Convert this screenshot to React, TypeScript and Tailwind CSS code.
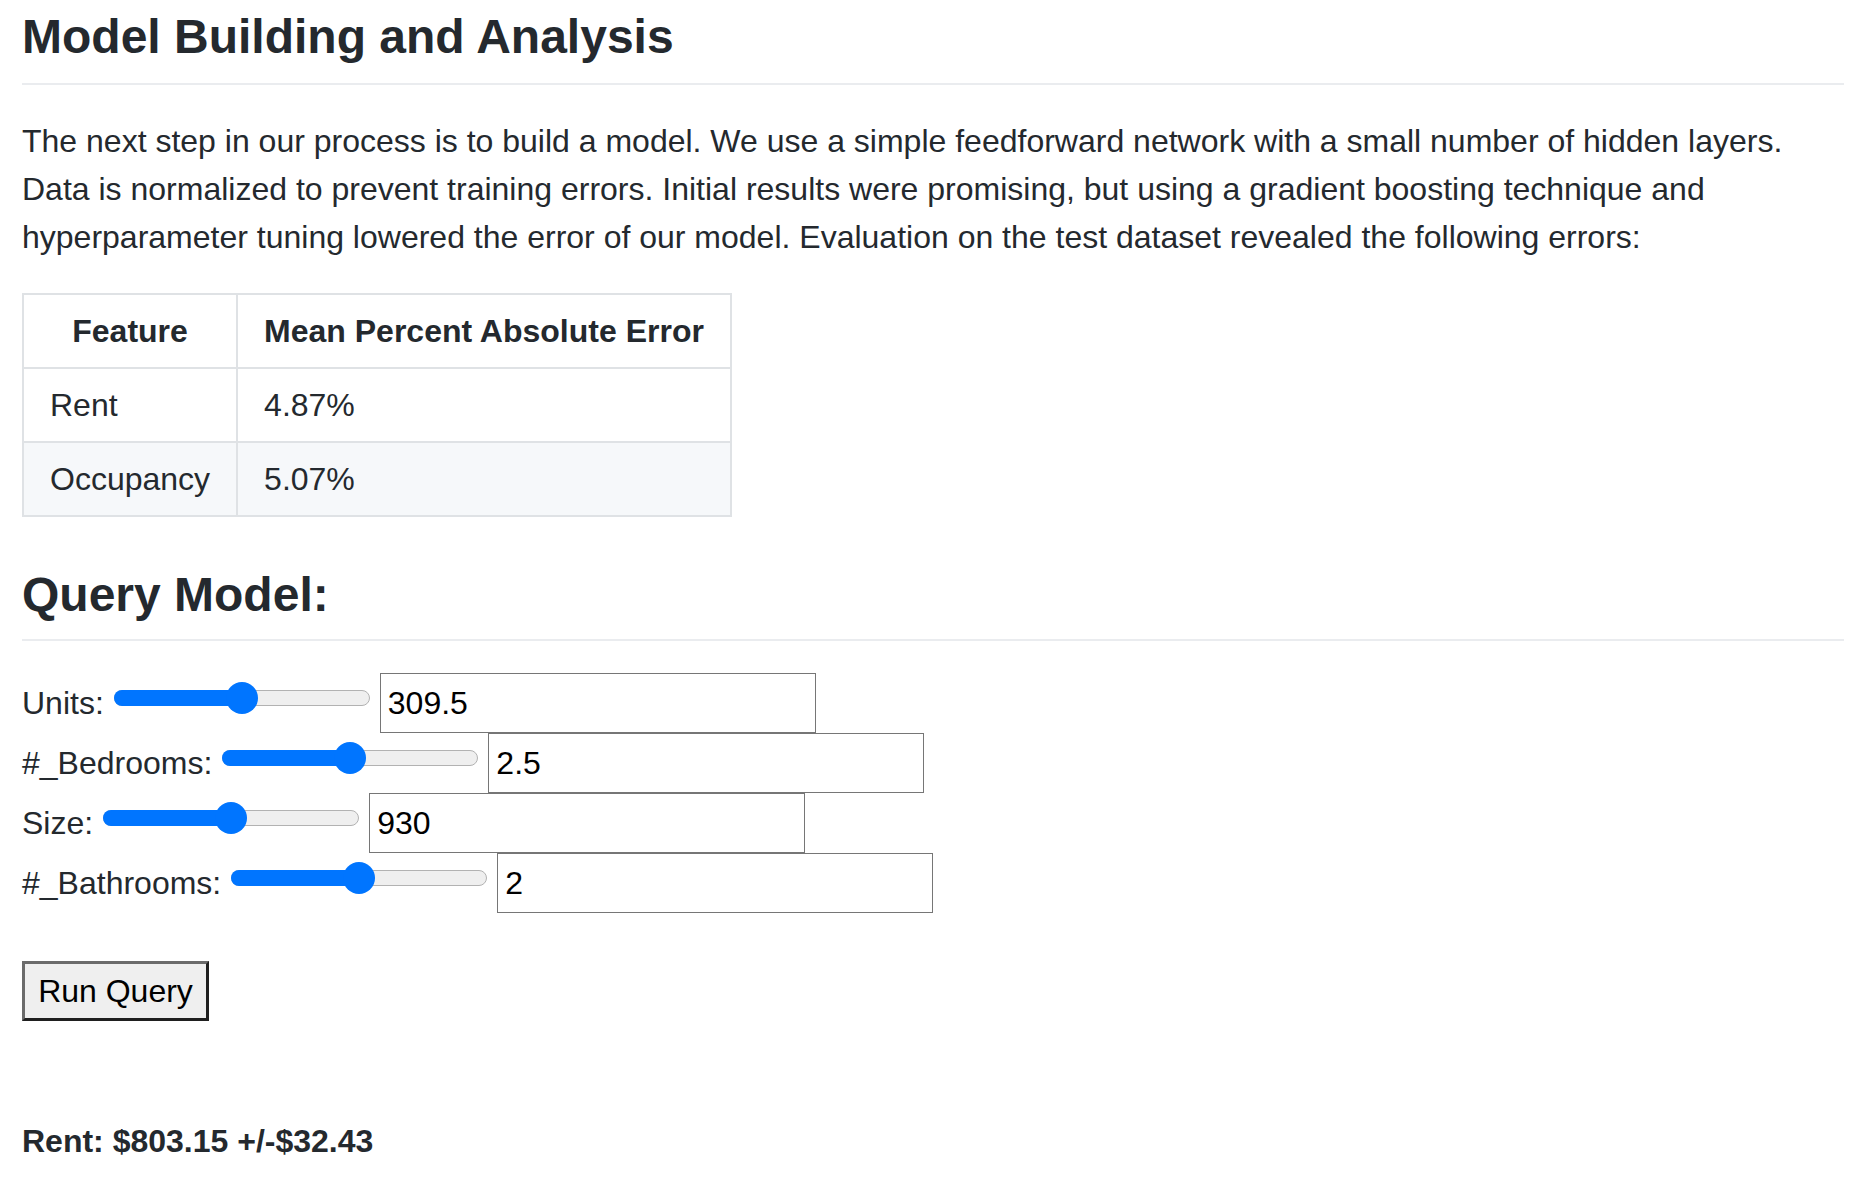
import React from "react";

const ROWS = [
  { feature: "Rent", error: "4.87%" },
  { feature: "Occupancy", error: "5.07%" },
];

const FIELDS = [
  { label: "Units:", value: "309.5", pct: 0.5 },
  { label: "#_Bedrooms:", value: "2.5", pct: 0.5 },
  { label: "Size:", value: "930", pct: 0.5 },
  { label: "#_Bathrooms:", value: "2", pct: 0.5 },
];

/** Chrome-style range slider drawn at 2x. */
function Slider({ pct }: { pct: number }) {
  const thumbLeft = (256 - 32) * pct;
  return (
    <div className="relative mt-[9px] h-[32px] w-[256px] shrink-0">
      <div className="absolute inset-x-0 top-[8px] h-[16px] rounded-full border border-[#b2b2b2] bg-[#efefef]" />
      <div
        className="absolute left-0 top-[8px] h-[16px] rounded-full bg-[#0075ff]"
        style={{ width: thumbLeft + 16 }}
      />
      <div
        className="absolute top-0 h-[32px] w-[32px] rounded-full bg-[#0075ff]"
        style={{ left: thumbLeft }}
      />
    </div>
  );
}

export default function App() {
  return (
    <div className="min-h-[1192px] bg-white pl-[22px] pr-[8px] pt-[7px] font-['Liberation_Sans',Arial,sans-serif] text-[#24292e]">
      <h2 className="mb-[32px] border-b-2 border-[#eaecef] pb-[15.5px] text-[48px] font-bold leading-[60px]">
        Model Building and Analysis
      </h2>
      <p className="mb-[32px] text-[32px] leading-[48px]">
        The next step in our process is to build a model. We use a simple feedforward network with a small number
        of hidden layers. Data is normalized to prevent training errors. Initial results were promising, but using a
        gradient boosting technique and hyperparameter tuning lowered the error of our model. Evaluation on the test
        dataset revealed the following errors:
      </p>

      <table className="border-collapse text-[32px] leading-[48px]">
        <thead>
          <tr className="bg-white">
            <th className="border-2 border-[#dfe2e5] px-[26px] py-[12px] text-center font-bold">Feature</th>
            <th className="border-2 border-[#dfe2e5] px-[26px] py-[12px] text-center font-bold">
              Mean Percent Absolute Error
            </th>
          </tr>
        </thead>
        <tbody>
          {ROWS.map((row, i) => (
            <tr key={row.feature} className={i % 2 === 1 ? "bg-[#f6f8fa]" : "bg-white"}>
              <td className="border-2 border-[#dfe2e5] px-[26px] py-[12px]">{row.feature}</td>
              <td className="border-2 border-[#dfe2e5] px-[26px] py-[12px]">{row.error}</td>
            </tr>
          ))}
        </tbody>
      </table>

      <h2 className="mb-[32px] mt-[48px] border-b-2 border-[#eaecef] pb-[14.5px] text-[48px] font-bold leading-[60px]">
        Query Model:
      </h2>

      <form className="flex flex-col">
        {FIELDS.map((f) => (
          <div key={f.label} className="flex h-[60px] items-start gap-[10px]">
            <label className="mt-[6px] text-[32px] leading-[48px]">{f.label}</label>
            <Slider pct={f.pct} />
            <input
              type="text"
              defaultValue={f.value}
              className="h-[60px] w-[436px] border border-[#767676] bg-white pl-[7px] text-[32px] text-black outline-none"
            />
          </div>
        ))}
        <div className="mt-[48px]">
          <button
            type="button"
            className="flex h-[60px] w-[187px] items-center justify-center border-[3px] border-b-[#1f1f1f] border-l-[#6b6b6b] border-r-[#1f1f1f] border-t-[#6b6b6b] bg-[#efefef] text-[32px] text-black"
          >
            Run Query
          </button>
        </div>
      </form>

      <p className="mt-[96px] text-[32px] font-bold leading-[48px]">Rent: $803.15 +/-$32.43</p>
    </div>
  );
}
